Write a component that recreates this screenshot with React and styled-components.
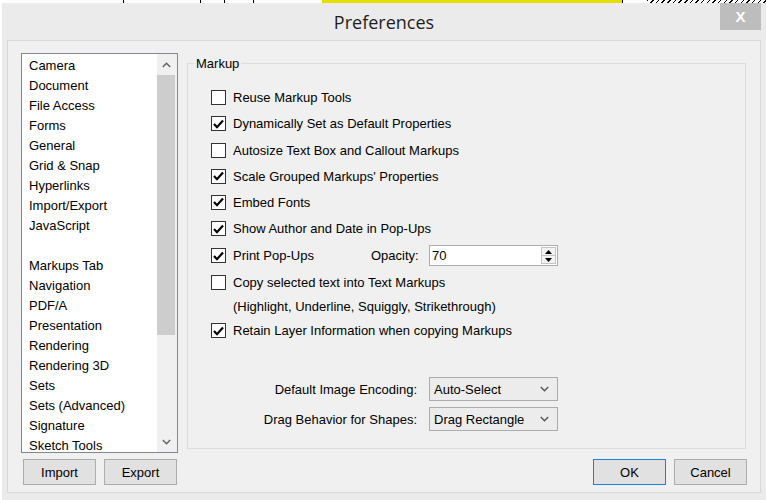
import React from 'react';
import styled, { createGlobalStyle } from 'styled-components';

const Global = createGlobalStyle`
  html, body { margin: 0; padding: 0; background: #fff; }
  body {
    width: 766px; height: 500px; overflow: hidden;
    font-family: "Liberation Sans", Arial, sans-serif;
    font-size: 13px; color: #000;
  }
  * { box-sizing: border-box; }
`;

const Screen = styled.div`
  width: 766px; height: 500px;
  display: flex; flex-direction: column;
  overflow: hidden; background: #fff;
`;

const TopStrip = styled.div`
  height: 3px; flex: none; display: flex;
`;

const StripSeg = styled.div`
  flex: none;
  width: ${p => p.w}px;
  background: ${p => p.bg || '#fff'};
  border-right: ${p => (p.line ? '1px solid #000' : 'none')};
`;

const Hatch = styled.div`
  flex: 1;
  background: repeating-linear-gradient(135deg, #000 0 1px, #fff 1px 4px);
`;

const Dialog = styled.div`
  flex: 1;
  margin-left: 2px;
  background: #ebebeb;
  display: flex; flex-direction: column;
`;

const TitleBar = styled.div`
  height: 37px; flex: none;
  display: grid;
  grid-template-columns: 1fr auto 1fr;
  align-items: start;
`;

const Title = styled.div`
  grid-column: 2;
  font-family: "Open Sans", "Noto Sans", sans-serif;
  font-size: 18px;
  line-height: 37px;
  padding-top: 1px;
  color: #1e1e1e;
`;

const CloseButton = styled.div`
  grid-column: 3;
  justify-self: end;
  width: 41px; height: 27px;
  margin-right: 5px;
  background: #bdbdbd;
  color: #fff;
  display: flex; align-items: center; justify-content: center;
  font-family: "Liberation Sans", Arial, sans-serif;
  font-weight: bold;
  font-size: 15px;
`;

const Panel = styled.div`
  margin-left: 5px;
  width: 754px; height: 453px;
  border: 1px solid #d9d9d9;
  background: #f0f0f0;
  padding: 12px 13px 7px 13px;
  display: grid;
  grid-template-columns: 157px 1fr;
  grid-template-rows: 400px 26px;
  column-gap: 9px;
  row-gap: 6px;
`;

const ListBox = styled.div`
  border: 1px solid #828790;
  background: #fff;
  display: flex;
  overflow: hidden;
`;

const ListItems = styled.div`
  flex: 1;
  padding: 2px 0 0 7px;
  display: flex; flex-direction: column;
  overflow: hidden;
`;

const Item = styled.div`
  flex: none;
  height: 20px; line-height: 20px;
  white-space: nowrap;
`;

const Scrollbar = styled.div`
  width: 20px; flex: none;
  display: flex; flex-direction: column;
  background: #f0f0f0;
`;

const ScrollArrow = styled.div`
  height: ${p => p.h}px; flex: none;
  display: flex; align-items: center; justify-content: center;
  padding-right: 2px;
`;

const Track = styled.div`
  flex: 1;
  display: flex; flex-direction: column;
`;

const Thumb = styled.div`
  height: 260px;
  margin-right: 2px;
  background: #cdcdcd;
`;

const ButtonRow = styled.div`
  display: flex;
  gap: 8px;
  padding-left: ${p => p.pl || 0}px;
  justify-content: ${p => (p.end ? 'flex-end' : 'flex-start')};
`;

const Button = styled.div`
  width: 73px; height: 26px;
  border: 1px solid ${p => (p.primary ? '#1a7fe0' : '#adadad')};
  background: #e1e1e1;
  display: flex; align-items: center; justify-content: center;
  font-size: 13px;
`;

const Group = styled.div`
  position: relative;
  margin: 10px 1px 4px 0;
  border: 1px solid #dcdcdc;
  padding: 20px 0 17px 23px;
  display: flex; flex-direction: column;
`;

const Legend = styled.span`
  position: absolute;
  top: -8px; left: 6px;
  padding: 0 2px;
  line-height: 15px;
  background: #f0f0f0;
`;

const CheckRow = styled.div`
  height: ${p => p.h}px;
  display: flex; align-items: center;
  gap: 7px;
  white-space: nowrap;
`;

const NoteRow = styled.div`
  height: ${p => p.h}px;
  display: flex; align-items: center;
  padding-left: 22px;
  white-space: nowrap;
`;

const Box = styled.div`
  width: 15px; height: 15px; flex: none;
  border: 1px solid #333;
  background: #fff;
  display: flex; align-items: center; justify-content: center;
`;

const FixedLabel = styled.span`
  width: ${p => p.w}px;
  flex: none;
`;

const SpinBox = styled.div`
  width: 129px; height: 21px;
  margin-left: -7px;
  border: 1px solid #adadad;
  background: #fff;
  display: flex;
`;

const SpinValue = styled.div`
  flex: 1;
  padding-left: 2px;
  line-height: 19px;
`;

const SpinButtons = styled.div`
  width: 15px; flex: none;
  margin: 1px 1px 1px 0;
  border: 1px solid #c4c4c4;
  background: #f4f4f4;
  display: flex; flex-direction: column;
`;

const SpinHalf = styled.div`
  flex: 1;
  display: flex; align-items: center; justify-content: center;
  border-top: ${p => (p.bottom ? '1px solid #c4c4c4' : 'none')};
`;

const SettingsGrid = styled.div`
  margin-top: auto;
  display: grid;
  grid-template-columns: 206px 129px;
  column-gap: 12px;
  row-gap: 6px;
  align-items: center;
`;

const SettingLabel = styled.div`
  text-align: right;
  white-space: nowrap;
`;

const Select = styled.div`
  height: 24px;
  border: 1px solid #acacac;
  background: #ececec;
  display: flex; align-items: center; justify-content: space-between;
  padding: 0 8px 0 4px;
`;

const Check = () => (
  <svg width="11" height="10" viewBox="0 0 11 10">
    <polyline points="1,5 4,8.2 10,1.5" fill="none" stroke="#000" strokeWidth="2.2" />
  </svg>
);

const Chevron = ({ up, color = '#606060' }) => (
  <svg width="9" height="6" viewBox="0 0 9 6">
    <polyline
      points={up ? '0.8,5 4.5,1.3 8.2,5' : '0.8,1 4.5,4.7 8.2,1'}
      fill="none" stroke={color} strokeWidth="1.4"
    />
  </svg>
);

const Tri = ({ up }) => (
  <svg width="7" height="4" viewBox="0 0 7 4">
    <polygon points={up ? '0,4 3.5,0 7,4' : '0,0 7,0 3.5,4'} fill="#000" />
  </svg>
);

const items = [
  'Camera', 'Document', 'File Access', 'Forms', 'General', 'Grid & Snap',
  'Hyperlinks', 'Import/Export', 'JavaScript', '', 'Markups Tab', 'Navigation',
  'PDF/A', 'Presentation', 'Rendering', 'Rendering 3D', 'Sets', 'Sets (Advanced)',
  'Signature', 'Sketch Tools',
];

const CheckBox = ({ checked }) => <Box>{checked && <Check />}</Box>;

export default function App() {
  return (
    <Screen>
      <Global />
      <TopStrip>
        <StripSeg w={124} line />
        <StripSeg w={77} line />
        <StripSeg w={24} line />
        <StripSeg w={29} line />
        <StripSeg w={68} />
        <StripSeg w={300} bg="#e5e000" />
        <StripSeg w={1} bg="#000" />
        <StripSeg w={24} />
        <Hatch />
      </TopStrip>
      <Dialog>
        <TitleBar>
          <Title>Preferences</Title>
          <CloseButton>X</CloseButton>
        </TitleBar>
        <Panel>
          <ListBox>
            <ListItems>
              {items.map((t, i) => (
                <Item key={i}>{t || '\u00a0'}</Item>
              ))}
            </ListItems>
            <Scrollbar>
              <ScrollArrow h={21}><Chevron up /></ScrollArrow>
              <Track><Thumb /></Track>
              <ScrollArrow h={20}><Chevron /></ScrollArrow>
            </Scrollbar>
          </ListBox>
          <Group>
            <Legend>Markup</Legend>
            <CheckRow h={26.5}><CheckBox />Reuse Markup Tools</CheckRow>
            <CheckRow h={26.5}><CheckBox checked />Dynamically Set as Default Properties</CheckRow>
            <CheckRow h={26.5}><CheckBox />Autosize Text Box and Callout Markups</CheckRow>
            <CheckRow h={25.5}><CheckBox checked />Scale Grouped Markups' Properties</CheckRow>
            <CheckRow h={26.5}><CheckBox checked />Embed Fonts</CheckRow>
            <CheckRow h={26.5}><CheckBox checked />Show Author and Date in Pop-Ups</CheckRow>
            <CheckRow h={27}>
              <CheckBox checked />
              <FixedLabel w={131}>Print Pop-Ups</FixedLabel>
              <FixedLabel w={58}>Opacity:</FixedLabel>
              <SpinBox>
                <SpinValue>70</SpinValue>
                <SpinButtons>
                  <SpinHalf><Tri up /></SpinHalf>
                  <SpinHalf bottom><Tri /></SpinHalf>
                </SpinButtons>
              </SpinBox>
            </CheckRow>
            <CheckRow h={27}><CheckBox />Copy selected text into Text Markups</CheckRow>
            <NoteRow h={21}>(Highlight, Underline, Squiggly, Strikethrough)</NoteRow>
            <CheckRow h={27.5}><CheckBox checked />Retain Layer Information when copying Markups</CheckRow>
            <SettingsGrid>
              <SettingLabel>Default Image Encoding:</SettingLabel>
              <Select>Auto-Select<Chevron color="#555" /></Select>
              <SettingLabel>Drag Behavior for Shapes:</SettingLabel>
              <Select>Drag Rectangle<Chevron color="#555" /></Select>
            </SettingsGrid>
          </Group>
          <ButtonRow pl={2}>
            <Button>Import</Button>
            <Button>Export</Button>
          </ButtonRow>
          <ButtonRow end>
            <Button primary>OK</Button>
            <Button>Cancel</Button>
          </ButtonRow>
        </Panel>
      </Dialog>
    </Screen>
  );
}
